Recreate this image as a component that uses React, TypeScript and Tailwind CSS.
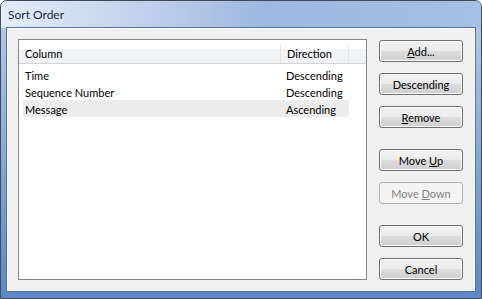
const rows = [
  { column: 'Time', direction: 'Descending', selected: false },
  { column: 'Sequence Number', direction: 'Descending', selected: false },
  { column: 'Message', direction: 'Ascending', selected: true },
];

function Btn({ children, disabled, className = '' }: { children: React.ReactNode; disabled?: boolean; className?: string }) {
  return (
    <button
      className={
        'h-[22px] w-[84px] whitespace-nowrap rounded-[3px] border pt-[1px] text-[11px] leading-none ' +
        (disabled
          ? 'border-[#adb2b5] bg-[#f4f4f4] text-[#838383] '
          : 'border-[#707070] bg-[linear-gradient(#f2f2f2_0%,#ebebeb_50%,#dddddd_50%,#cfcfcf_100%)] text-black shadow-[inset_0_0_0_1px_#fcfcfc] ') +
        className
      }
    >
      {children}
    </button>
  );
}

export default function App() {
  return (
    <div
      className="flex h-[299px] w-[482px] flex-col rounded-t-[7px] border border-[#404a58] bg-[linear-gradient(#b9cdea,#7fa2d6_60%,#5c87c8)]"
      style={{ fontFamily: 'Lato, "Noto Sans", sans-serif' }}
    >
      <div className="flex h-[27px] shrink-0 items-center rounded-t-[6px] bg-[linear-gradient(90deg,#e4ecf6_0%,#c9d8ee_22%,#9fb8e0_55%,#a7bfe3_100%)] pl-[7px] pt-[1px] text-[12px] text-[#1c2a3c]">
        Sort Order
      </div>
      <div className="mx-[6px] mb-[7px] flex flex-1 gap-[12px] border border-[#fafcfe] bg-[#f0f0f0] pl-[10px] pr-[11px] pt-[10px] shadow-[0_0_0_1px_#56729c]">
        <div className="flex h-[241px] w-[349px] flex-col whitespace-nowrap border border-[#828790] bg-white text-[11px] text-black">
          <div className="flex h-[24px] shrink-0 border-b border-[#d5d5d5] bg-[linear-gradient(#ffffff_0%,#ffffff_40%,#f3f4f6_40%,#f1f2f4_100%)] pt-[5px]">
            <div className="flex w-[262px] items-center border-r border-[#e3e4e6] pl-[6px]">Column</div>
            <div className="flex w-[68px] items-center border-r border-[#e3e4e6] pl-[6px]">Direction</div>
            <div className="flex-1" />
          </div>
          <div className="flex flex-col pt-[2px]">
            {rows.map((r) => (
              <div key={r.column} className={'ml-[4px] flex h-[17px] w-[326px] items-center pt-[3px] ' + (r.selected ? 'bg-[#ececec]' : '')}>
                <div className="w-[258px] pl-[2px]">{r.column}</div>
                <div className="pl-[5px]">{r.direction}</div>
              </div>
            ))}
          </div>
        </div>
        <div className="flex flex-col pt-[1px]">
          <Btn><u>A</u>dd...</Btn>
          <Btn className="mt-[11px]">Descending</Btn>
          <Btn className="mt-[11px]"><u>R</u>emove</Btn>
          <Btn className="mt-[21px]">Move <u>U</u>p</Btn>
          <Btn className="mt-[11px]" disabled>Move <u>D</u>own</Btn>
          <Btn className="mt-[21px]">OK</Btn>
          <Btn className="mt-[11px]">Cancel</Btn>
        </div>
      </div>
    </div>
  );
}
